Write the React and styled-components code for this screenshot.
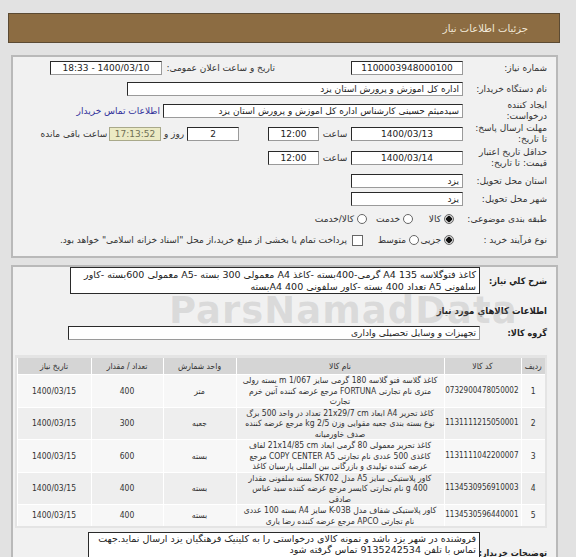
import React from "react"
import styled, { createGlobalStyle } from "styled-components"

const GlobalStyle = createGlobalStyle`
  html, body {
    margin: 0;
    padding: 0;
    background: #e2e2e2;
    overflow: hidden;
  }
  body {
    font-family: "DejaVu Sans", "Noto Sans", sans-serif;
    color: #333;
  }
`

const items = [
  {
    code: "0732900478050002",
    name: "کاغذ گلاسه فتو گلاسه 180 گرمی سایز m 1/067 بسته رولی متری نام تجارتی FORTUNA مرجع عرضه کننده آتین خرم تجارت",
    unit: "متر",
    qty: "400",
  },
  {
    code: "1131111215050001",
    name: "کاغذ تحریر A4 ابعاد 21x29/7 cm تعداد در واحد 500 برگ نوع بسته بندی جعبه مقوایی وزن 2/5 kg مرجع عرضه کننده صدف خاورمیانه",
    unit: "جعبه",
    qty: "300",
  },
  {
    code: "1131111042200007",
    name: "کاغذ تحریر معمولی 80 گرمی ابعاد 21x14/85 cm لفاف کاغذی 500 عددی نام تجارتی COPY CENTER A5 مرجع عرضه کننده تولیدی و بازرگانی بین المللی پارسیان کاغذ",
    unit: "بسته",
    qty: "600",
  },
  {
    code: "1134530956910003",
    name: "کاور پلاستیکی سایز A5 مدل SK702 بسته سلفونی مقدار 400 g نام تجارتی کایسر مرجع عرضه کننده سید عباس صادقی",
    unit: "بسته",
    qty: "400",
  },
  {
    code: "1134530596440001",
    name: "کاور پلاستیکی شفاف مدل K-03B سایز A4 بسته 100 عددی نام تجارتی APCO مرجع عرضه کننده رضا یاری",
    unit: "بسته",
    qty: "400",
  },
]

const App = () => (
  <Page>
    <GlobalStyle />
    <TitleBar>جزئیات اطلاعات نیاز</TitleBar>

    <Panel>
      <Row h={21}>
        <Label>شماره نیاز:</Label>
        <Field w={112} center>1100003948000100</Field>
        <Spacer w={76} />
        <Label w={113}>تاریخ و ساعت اعلان عمومی:</Label>
        <Field w={112} center>1400/03/10 - 18:33</Field>
      </Row>
      <Row h={21}>
        <Label>نام دستگاه خریدار:</Label>
        <Field w={336}>اداره کل اموزش و پرورش استان یزد</Field>
      </Row>
      <Row h={24}>
        <Label two>
          ایجاد کننده
          <br />
          درخواست:
        </Label>
        <Field w={300}>سیدمیثم حسینی کارشناس اداره کل اموزش و پرورش استان یزد</Field>
        <Spacer w={3} />
        <ContactLink>اطلاعات تماس خریدار</ContactLink>
      </Row>
      <Row h={22}>
        <Label two>
          مهلت ارسال پاسخ:
          <br />
          تا تاریخ:
        </Label>
        <Field w={112} center>1400/03/13</Field>
        <Small w={32}>ساعت</Small>
        <Field w={51} center>12:00</Field>
        <Spacer w={29} />
        <Field w={52} center>2</Field>
        <Small w={26}>روز و</Small>
        <Field w={52} center remain>17:13:52</Field>
        <Small w={70}>ساعت باقی مانده</Small>
      </Row>
      <Row h={26}>
        <Label two>
          حداقل تاریخ اعتبار
          <br />
          قیمت: تا تاریخ:
        </Label>
        <Field w={112} center>1400/03/14</Field>
        <Small w={32}>ساعت</Small>
        <Field w={51} center>12:00</Field>
      </Row>
      <Row h={19}>
        <Label>استان محل تحویل:</Label>
        <Field w={112}>یزد</Field>
      </Row>
      <Row h={18}>
        <Label>شهر محل تحویل:</Label>
        <Field w={112}>یزد</Field>
      </Row>
      <Row h={21}>
        <Label>طبقه بندی موضوعی:</Label>
        <Options>
          <Option w={41}><Radio checked />کالا</Option>
          <Option w={46}><Radio />خدمت</Option>
          <Option><Radio />کالا/خدمت</Option>
        </Options>
      </Row>
      <Row h={22}>
        <Label>نوع فرآیند خرید :</Label>
        <Options>
          <Option w={35}><Radio checked />جزیی</Option>
          <Option w={56}><Radio />متوسط</Option>
          <Option><Check />پرداخت تمام یا بخشی از مبلغ خرید،از محل "اسناد خزانه اسلامی" خواهد بود.</Option>
        </Options>
      </Row>
    </Panel>

    <Panel open>
      <Watermark>ParsNamadData</Watermark>
      <Row h={27}>
        <BoldLabel>شرح كلي نياز:</BoldLabel>
        <Box w={410}>
          کاغذ فتوگلاسه A4 135 گرمی-400بسته -کاغذ A4 معمولی 300 بسته -A5 معمولی 600بسته -کاور
          سلفونی A5  تعداد 400 بسته -کاور سلفونی 400 A4بسته
        </Box>
      </Row>
      <SectionTitle>اطلاعات كالاهاي مورد نياز</SectionTitle>
      <Row h={16}>
        <BoldLabel>گروه کالا:</BoldLabel>
        <Field w={412}>تجهیزات و وسایل تحصیلی واداری</Field>
      </Row>

      <TableFrame>
        <Table>
          <colgroup>
            <col style={{ width: 24 }} />
            <col style={{ width: 77 }} />
            <col style={{ width: 208 }} />
            <col style={{ width: 73 }} />
            <col style={{ width: 72 }} />
            <col style={{ width: 74 }} />
          </colgroup>
          <thead>
            <tr>
              <Th>ردیف</Th>
              <Th>کد کالا</Th>
              <Th>نام کالا</Th>
              <Th>واحد شمارش</Th>
              <Th>تعداد / مقدار</Th>
              <Th>تاریخ نیاز</Th>
            </tr>
          </thead>
          <tbody>
            {items.map((it, i) => (
              <Tr key={it.code} odd={i % 2 === 1}>
                <Td>{i + 1}</Td>
                <Td code>{it.code}</Td>
                <Td name>{it.name}</Td>
                <Td>{it.unit}</Td>
                <Td>{it.qty}</Td>
                <Td>1400/03/15</Td>
              </Tr>
            ))}
          </tbody>
        </Table>
      </TableFrame>

      <NoteRow>
        <BoldLabel>توضیحات خریدار:</BoldLabel>
        <Box w={392} note>
          فروشنده در شهر یزد باشد و نمونه کالای درخواستی را به کلینیک فرهنگیان یزد ارسال نماید.جهت تماس با تلفن 9135242534 تماس گرفته شود
        </Box>
      </NoteRow>
    </Panel>
  </Page>
)

export default App

const condensed = `"DejaVu Sans Condensed", "DejaVu Sans", sans-serif`

const Page = styled.div`
  direction: rtl;
  padding: 13px 16px 0 8px;
  height: 557px;
  box-sizing: border-box;
  overflow: hidden;
  font-size: 9px;
`

const TitleBar = styled.div`
  height: 30px;
  line-height: 30px;
  background: #8c6c42;
  border: 1px solid #5b4a33;
  box-sizing: border-box;
  color: #f1e9d9;
  font-size: 10px;
  padding-right: 31px;
  margin-bottom: 12px;
`

const Panel = styled.div`
  position: relative;
  margin: 0 2px 7px 3px;
  background: #f1f1f1;
  border: 2px solid #b9b9b9;
  border-bottom: ${(p) => (p.open ? "none" : "2px solid #b9b9b9")};
  padding: ${(p) => (p.open ? "0 9px 0 0" : "0 9px 5px 0")};
  overflow: hidden;
`

const Row = styled.div`
  display: flex;
  align-items: center;
  height: ${(p) => p.h}px;
`

const Label = styled.div`
  flex: none;
  width: ${(p) => p.w || 84}px;
  line-height: ${(p) => (p.two ? "11px" : "12px")};
  color: #333;
  white-space: nowrap;
`

const BoldLabel = styled.div`
  flex: none;
  width: 67px;
  font-family: ${condensed};
  font-weight: bold;
  font-size: 9px;
  line-height: 12px;
  color: #222;
  white-space: nowrap;
`

const Small = styled.div`
  flex: none;
  width: ${(p) => p.w}px;
  text-align: center;
  white-space: nowrap;
`

const Spacer = styled.div`
  flex: none;
  width: ${(p) => p.w}px;
`

const Field = styled.div`
  flex: none;
  box-sizing: border-box;
  width: ${(p) => p.w}px;
  height: 14px;
  line-height: 12px;
  padding: 0 3px;
  background: ${(p) => (p.remain ? "#ebeac4" : "#fff")};
  color: ${(p) => (p.remain ? "#6f6f55" : "#222")};
  border: 1px solid #2a2a2a;
  border-color: ${(p) => (p.remain ? "#a9a98a" : "#2a2a2a #9a9a9a #9a9a9a #2a2a2a")};
  text-align: ${(p) => (p.center ? "center" : "right")};
  white-space: nowrap;
  overflow: hidden;
`

const Box = styled.div`
  flex: none;
  box-sizing: border-box;
  width: ${(p) => p.w}px;
  height: ${(p) => (p.note ? 27 : 27)}px;
  padding: ${(p) => (p.note ? "0 3px" : "1px 3px")};
  line-height: ${(p) => (p.note ? "11px" : "12px")};
  font-size: 9.5px;
  background: #fff;
  border: 1px solid #2a2a2a;
  border-bottom: ${(p) => (p.note ? "none" : "1px solid #2a2a2a")};
  color: #222;
  overflow: hidden;
`

const ContactLink = styled.a`
  color: #30309a;
  white-space: nowrap;
  cursor: pointer;
`

const Options = styled.div`
  display: flex;
  align-items: center;
  padding-right: 9px;
`

const Option = styled.label`
  flex: none;
  display: flex;
  align-items: center;
  gap: 3px;
  width: ${(p) => (p.w ? `${p.w}px` : "auto")};
  white-space: nowrap;
`

const Radio = styled.span`
  flex: none;
  width: 10px;
  height: 10px;
  border-radius: 50%;
  box-sizing: border-box;
  border: 1px solid #666;
  background: ${(p) => (p.checked ? "radial-gradient(circle, #111 0 2.6px, #cfcfcf 3px)" : "#fff")};
`

const Check = styled.span`
  flex: none;
  width: 11px;
  height: 11px;
  box-sizing: border-box;
  border: 1px solid #666;
  background: #fff;
  margin-left: 2px;
`

const SectionTitle = styled.div`
  height: 31px;
  line-height: 33px;
  font-family: ${condensed};
  font-weight: bold;
  font-size: 9.5px;
  color: #222;
`

const TableFrame = styled.div`
  margin: 14px 0 0 10px;
  background: #e4e4e4;
  padding: 3px 2px 2px 2px;
  width: 528px;
`

const Table = styled.table`
  width: 528px;
  border-collapse: collapse;
  table-layout: fixed;
  font-family: ${condensed};
`

const Th = styled.th`
  height: 16px;
  padding: 0;
  background: #d5d5d5;
  color: #333;
  font-weight: normal;
  font-size: 8.5px;
  border-left: 1px solid #fff;
`

const Tr = styled.tr`
  background: ${(p) => (p.odd ? "#eeeeee" : "#f7f7f7")};
`

const Td = styled.td`
  padding: ${(p) => (p.name ? "0 5px" : "0 2px")};
  text-align: center;
  vertical-align: middle;
  line-height: 10.5px;
  font-size: ${(p) => (p.code ? "8px" : "8.5px")};
  color: #333;
  white-space: ${(p) => (p.code ? "nowrap" : "normal")};
  border-left: 1px solid #fff;
  border-top: 1px solid #fff;
`

const NoteRow = styled.div`
  display: flex;
  align-items: flex-end;
  margin-top: 4px;
`

const Watermark = styled.div`
  position: absolute;
  top: 22px;
  left: 156px;
  font-family: "DejaVu Sans", sans-serif;
  font-weight: bold;
  font-size: 37px;
  color: rgba(150, 150, 150, 0.25);
  direction: ltr;
  pointer-events: none;
  letter-spacing: 1px;
`
